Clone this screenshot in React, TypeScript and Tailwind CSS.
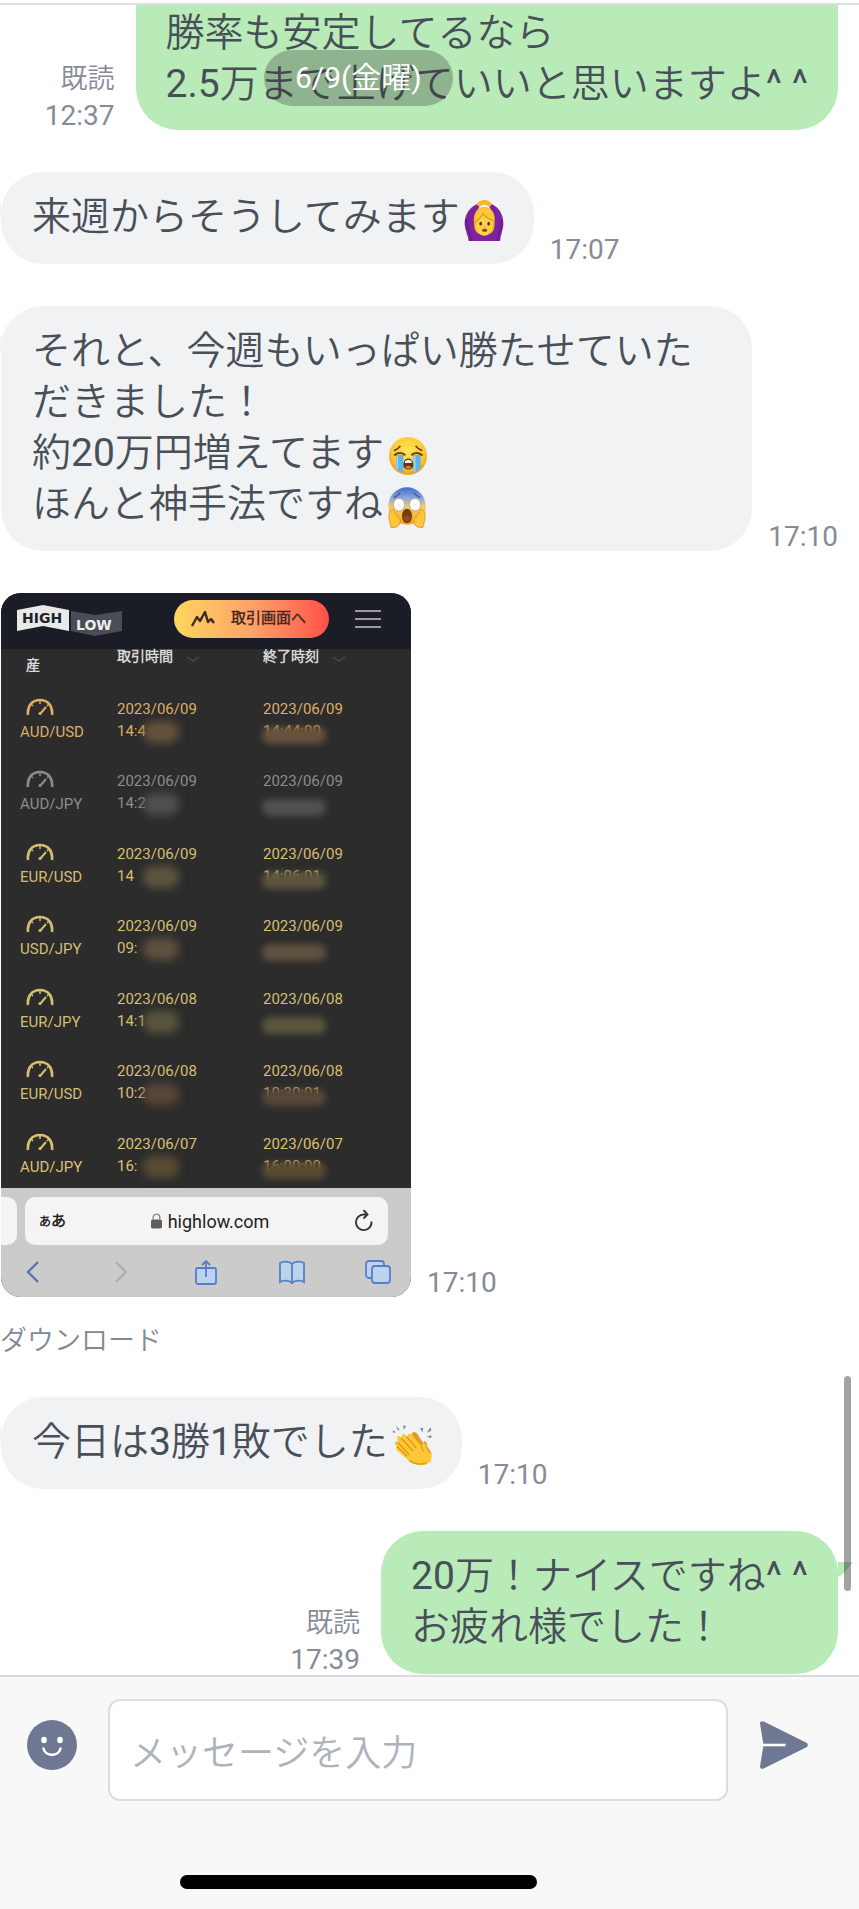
import { ReactNode } from 'react'

type Trade = {
  pair: string
  start: string
  startTime: string
  end: string
  endTime: string
  tone: string
  smudge: string
}

const TRADES: Trade[] = [
  { pair: 'AUD/USD', start: '2023/06/09', startTime: '14:4', end: '2023/06/09', endTime: '14:44:00', tone: 'text-[#dcae66]', smudge: 'bg-[#66523a]' },
  { pair: 'AUD/JPY', start: '2023/06/09', startTime: '14:2', end: '2023/06/09', endTime: '', tone: 'text-[#8c8c8c]', smudge: 'bg-[#505050]' },
  { pair: 'EUR/USD', start: '2023/06/09', startTime: '14', end: '2023/06/09', endTime: '14:06:01', tone: 'text-[#d6bd72]', smudge: 'bg-[#5c553e]' },
  { pair: 'USD/JPY', start: '2023/06/09', startTime: '09:', end: '2023/06/09', endTime: '', tone: 'text-[#d3bf72]', smudge: 'bg-[#5f503f]' },
  { pair: 'EUR/JPY', start: '2023/06/08', startTime: '14:1', end: '2023/06/08', endTime: '', tone: 'text-[#d3bf72]', smudge: 'bg-[#5a553d]' },
  { pair: 'EUR/USD', start: '2023/06/08', startTime: '10:2', end: '2023/06/08', endTime: '10:30:01', tone: 'text-[#d6bd72]', smudge: 'bg-[#584639]' },
  { pair: 'AUD/JPY', start: '2023/06/07', startTime: '16:', end: '2023/06/07', endTime: '16:00:00', tone: 'text-[#dcc070]', smudge: 'bg-[#5a4c34]' },
]

export default function App() {
  return (
    <div className="min-h-screen flex flex-col bg-white font-['Roboto','Noto_Sans_CJK_JP_DemiLight','Noto_Sans_CJK_JP',sans-serif] font-normal text-[#484f58]">
      <main className="relative flex-1 overflow-hidden pt-[3px]">
        <div className="border-t-2 border-[#dedfe6]">
          <div className="flex flex-col gap-[42px]">
            <Sent time="12:37" cut>
              勝率も安定してるなら<br />
              2.5万まで上げていいと思いますよ^ ^
            </Sent>

            <Received time="17:07">来週からそうしてみます<ArmsUp /></Received>

            <Received time="17:10" wide>
              それと、今週もいっぱい勝たせていた<br />
              だきました！<br />
              約20万円増えてます<Crying /><br />
              ほんと神手法ですね<Scream />
            </Received>

            <div className="-mb-[6px]">
              <div className="flex items-end gap-4 pl-px">
                <Attachment />
                <Time>17:10</Time>
              </div>
              <a href="#download" className="mt-6 block w-fit text-[27px] leading-[40px] text-[#7f8998]">ダウンロード</a>
            </div>

            <Received time="17:10">今日は3勝1敗でした<Clap /></Received>

            <Sent time="17:39">
              20万！ナイスですね^ ^<br />
              お疲れ様でした！
            </Sent>
          </div>
        </div>

        {/* floating date + scroll thumb */}
        <div className="absolute left-[264px] top-[50px] rounded-full bg-[#323232]/30 px-[31px] py-2 text-[30px] leading-[40px] text-white">6/9(金曜)</div>
        <div className="absolute right-2 bottom-[84px] h-[215px] w-[7px] rounded-full bg-black/36" />
      </main>

      <footer className="border-t-2 border-[#d9dbe4] bg-[#f8f8f9] pt-[22px] pb-5">
        <form className="flex items-start pl-[27px] pr-[50px]" onSubmit={e => e.preventDefault()}>
          <button type="button" aria-label="絵文字" className="mt-[21px] shrink-0">
            <svg viewBox="0 0 50 50" className="size-[50px]">
              <circle cx="25" cy="25" r="25" fill="#6f7893" />
              <ellipse cx="17" cy="20" rx="2.8" ry="3.2" fill="#fff" />
              <ellipse cx="33" cy="20" rx="2.8" ry="3.2" fill="#fff" />
              <path d="M16.500 28.500C18.500 37 31.500 37 33.500 28.500" fill="none" stroke="#fff" strokeWidth="2.600" strokeLinecap="round" />
            </svg>
          </button>
          <input
            type="text"
            aria-label="メッセージを入力"
            placeholder="メッセージを入力"
            className="mx-[31px] h-[102px] min-w-0 flex-1 rounded-xl border-2 border-[#dcdddf] bg-white px-5 pt-2 text-[36px] outline-none placeholder:text-[#adb2bd]"
          />
          <button type="submit" aria-label="送信" className="mt-[21px] shrink-0">
            <svg viewBox="0 0 50 50" className="size-[50px]">
              <path d="M1 3.500C1 1.500 3 .6 4.700 1.500L47.500 22.800C49.300 23.800 49.300 26.200 47.500 27.200L4.700 48.500C3 49.400 1 48.500 1 46.500L4.500 25Z" fill="#6f7893" />
              <path d="M4 25H26.500" stroke="#fff" strokeWidth="2.600" />
            </svg>
          </button>
        </form>
        <div className="mt-[74px] ml-[21%] h-[14px] w-[357px] rounded-full bg-black" />
      </footer>
    </div>
  )
}

function Time({ children }: { children: ReactNode }) {
  return <div className="flex shrink-0 flex-col gap-[9px] text-right text-[28px] leading-[28px] text-[#868b98]">{children}</div>
}

function Received({ time, wide, children }: { time: string; wide?: boolean; children: ReactNode }) {
  return (
    <div className="flex items-end gap-4 pl-px pr-[21px]">
      <div className={`relative rounded-[42px] bg-[#f1f2f4] pt-5 pb-[21px] pl-[31px] text-[39px] leading-[51px] ${wide ? 'flex-1' : 'pr-[30px]'}`}>
        <svg viewBox="0 0 15 16" className="absolute right-full top-[30px] h-4 w-[15px] -scale-x-100">
          <path d="M0 0H15C12 4 6 12 0 15Z" fill="#f1f2f4" />
        </svg>
        {children}
      </div>
      <Time>{time}</Time>
    </div>
  )
}

function Sent({ time, cut, children }: { time: string; cut?: boolean; children: ReactNode }) {
  return (
    <div className="flex items-end justify-end gap-[21px] pr-[21px]">
      <Time>
        <span className="text-[27px]">既読</span>
        <span>{time}</span>
      </Time>
      <div className={`relative bg-[#b8ebb8] px-[30px] text-[39px] leading-[51px] ${cut ? 'rounded-b-[42px] pt-[3px] pb-5' : 'rounded-[42px] pt-5 pb-[21px]'}`}>
        {!cut && (
          <svg viewBox="0 0 15 16" className="absolute left-full top-[31px] h-4 w-[15px]">
            <path d="M0 0H15C12 4 6 12 0 15Z" fill="#b8ebb8" />
          </svg>
        )}
        {children}
      </div>
    </div>
  )
}

function Attachment() {
  return (
    <div className="w-[410px] overflow-hidden rounded-[20px] bg-[#2c2c2c]">
      <div className="flex h-14 items-center bg-[#1a1c26] pl-4 pr-[30px]">
        <Logo />
        <button type="button" className="ml-[51px] -mt-[5px] flex h-[38px] w-[155px] items-center rounded-full bg-linear-to-r from-[#ffd65c] via-[#ffa267] to-[#ff4d4a] pl-4 text-[15px] font-bold text-[#4a2c26]">
          <svg viewBox="0 0 26 20" className="mr-[15px] w-[26px]" fill="none" stroke="#3b2b20" strokeWidth="2.400" strokeLinejoin="round">
            <path d="M2 17L7 8L10 12L15 3L18 13L21 10L24 14" />
          </svg>
          取引画面へ
        </button>
        <button type="button" aria-label="メニュー" className="ml-auto -mt-1 flex w-[26px] flex-col gap-[6px]">
          <span className="h-[2px] bg-[#9a9ba2]" />
          <span className="h-[2px] bg-[#9a9ba2]" />
          <span className="h-[2px] bg-[#9a9ba2]" />
        </button>
      </div>

      <table className="h-[539px] w-full table-fixed border-collapse text-left">
        <colgroup>
          <col className="w-[116px]" />
          <col className="w-[146px]" />
          <col />
        </colgroup>
        <thead>
          <tr className="h-8 align-top text-[14px] leading-[14px] text-[#d8d8d8]">
            <th className="p-0 pl-[25px] font-bold"><span className="block pt-[9px]">産</span></th>
            <th className="p-0 font-bold"><ColumnTitle label="取引時間" /></th>
            <th className="p-0 font-bold"><ColumnTitle label="終了時刻" /></th>
          </tr>
        </thead>
        <tbody>
          {TRADES.map((t, i) => (
            <tr key={i} className={`align-top text-[15px] leading-[22px] ${t.tone}`}>
              <td className="p-0 pt-[17px] pl-[19px]">
                <Gauge />
                <span className="block pt-[5px]">{t.pair}</span>
              </td>
              <td className="p-0 pt-[17px]">
                {t.start}
                <div className="relative h-[22px]">
                  {t.startTime}
                  <span className={`absolute left-[26px] top-px h-[22px] w-9 rounded-full blur-[4px] ${t.smudge}`} />
                </div>
              </td>
              <td className="p-0 pt-[17px]">
                {t.end}
                <div className="relative h-[22px]">
                  {t.endTime}
                  <span className={`absolute -left-px top-[7px] h-[17px] w-16 rounded-lg blur-[3px] ${t.smudge}`} />
                </div>
              </td>
            </tr>
          ))}
        </tbody>
      </table>

      <SafariBar />
    </div>
  )
}

function ColumnTitle({ label }: { label: string }) {
  return (
    <span className="flex h-[14px] items-end">
      {label}
      <svg viewBox="0 0 16 6" className="ml-3 mb-px w-4" fill="none" stroke="#484848" strokeWidth="1.500">
        <path d="M2 1L8 5L14 1" />
      </svg>
    </span>
  )
}

function Logo() {
  return (
    <svg viewBox="0 0 106 32" className="w-[106px] font-['DejaVu_Sans',sans-serif] font-bold" role="img" aria-label="HIGH LOW">
      <path d="M0 5L26 0L52 5V26L26 21L0 26Z" fill="#e9e9ea" />
      <path d="M54 6L78 10L105 6V26L78 31L54 26Z" fill="#4b4d54" />
      <text x="5" y="18" fontSize="14" fill="#20222a">HIGH</text>
      <text x="59" y="25" fontSize="14" fill="#ededee">LOW</text>
    </svg>
  )
}

function Gauge() {
  return (
    <svg viewBox="0 0 28 18" className="ml-[6px] block h-[18px] w-7" fill="none" stroke="currentColor">
      <path d="M2 17C1 8 6 2 14 2S27 8 26 17" strokeWidth="2.600" />
      <path d="M14 2V6M5 6L7 8M23 6L21 8" strokeWidth="1.500" />
      <path d="M14 16L20 9" strokeWidth="2" />
      <circle cx="14" cy="15.500" r="1.500" fill="currentColor" stroke="none" />
    </svg>
  )
}

function SafariBar() {
  return (
    <div className="h-[109px] bg-[#cbcbcc] pt-[9px] text-[#222]">
      <div className="flex h-12 gap-2">
        <div className="w-4 rounded-r-[10px] bg-[#f4f4f4]" />
        <div className="mr-[23px] flex flex-1 items-center rounded-[10px] bg-[#f4f4f4] px-[14px]">
          <span className="text-[15px] font-bold"><small className="text-[12px]">あ</small>あ</span>
          <div className="flex flex-1 items-center justify-center gap-[6px] text-[18px]">
            <svg viewBox="0 0 10 15" className="w-[11px]">
              <rect y="6" width="10" height="8" rx="1.500" fill="#5e5e5e" />
              <path d="M2 6V4C2 0 8 0 8 4V6" fill="none" stroke="#8a8a8a" strokeWidth="1.300" />
            </svg>
            highlow.com
          </div>
          <svg viewBox="0 0 20 22" className="h-[22px] w-5" fill="none" stroke="#333" strokeWidth="1.900">
            <path d="M17.500 11.500A7.800 7.800 0 1 1 9.700 4.500H13" />
            <path d="M9.500 0L13.500 4.500L9.500 8.500" />
          </svg>
        </div>
      </div>
      <div className="mt-[14px] flex justify-between px-5 [&>svg]:size-[26px]">
        <svg viewBox="0 0 26 26" fill="none" stroke="#5672b4" strokeWidth="2.200"><path d="M17 3L7 13L17 23" /></svg>
        <svg viewBox="0 0 26 26" fill="none" stroke="#adadb2" strokeWidth="2.200"><path d="M9 3L19 13L9 23" /></svg>
        <svg viewBox="0 0 26 26" fill="#bdd2ec" stroke="#557fca" strokeWidth="1.800">
          <rect x="3" y="9" width="20" height="16" rx="2" />
          <path d="M13 18V2M9 6L13 2L17 6" fill="none" />
        </svg>
        <svg viewBox="0 0 26 26" fill="#bdd2ec" stroke="#557fca" strokeWidth="1.800">
          <path d="M13 5C10 2 4 2 1 4V23C4 21 10 21 13 24C16 21 22 21 25 23V4C22 2 16 2 13 5ZM13 5V24" />
        </svg>
        <svg viewBox="0 0 26 26" fill="#bdd2ec" stroke="#557fca" strokeWidth="1.800">
          <rect x="1" y="2" width="18" height="17" rx="3" />
          <rect x="7" y="7" width="18" height="17" rx="3" />
        </svg>
      </div>
    </div>
  )
}

function Emoji({ label, children }: { label: string; children: ReactNode }) {
  return (
    <svg viewBox="0 0 120 126" role="img" aria-label={label} className="ml-1 inline-block h-[42px] w-10 align-middle">
      {children}
    </svg>
  )
}

function ArmsUp() {
  return (
    <Emoji label="🙆">
      <path d="M38 18C44 -2 78 -2 84 18L78 28C72 14 50 14 44 28Z" fill="#f7b928" />
      <path d="M38 16L46 24C36 38 34 50 36 70L44 98H78L86 70C88 50 86 38 76 24L84 16C106 26 120 50 118 78C116 96 110 108 108 126H14C12 108 4 96 2 78C0 50 16 26 38 16Z" fill="#7d23a0" />
      <path d="M8 60C6 84 20 100 22 126M112 60C114 84 102 100 100 126" stroke="#5d1580" strokeWidth="3" fill="none" />
      <path d="M30 72C26 40 42 24 61 24S96 40 92 72C92 98 84 106 61 108C38 106 30 98 30 72Z" fill="#f0ae25" />
      <path d="M35 74C35 54 48 44 61 44S89 54 87 74C86 98 74 110 61 110S36 98 35 74Z" fill="#fdd047" />
      <path d="M32 72C30 40 46 25 62 25C82 25 92 42 90 68C78 64 64 56 56 44C52 58 42 62 32 72Z" fill="#fbc638" />
      <path d="M32 72C42 62 52 58 56 44C68 59 79 61 89 66" stroke="#d99622" strokeWidth="3.500" fill="none" />
      <ellipse cx="50" cy="74" rx="4" ry="5.500" fill="#513018" />
      <ellipse cx="74" cy="74" rx="4" ry="5.500" fill="#513018" />
      <ellipse cx="62" cy="94" rx="8" ry="4.500" fill="#8a3a1c" />
      <path d="M59 84Q62 87 65 84" stroke="#c98518" strokeWidth="2" fill="none" />
    </Emoji>
  )
}

function Crying() {
  return (
    <Emoji label="😭">
      <defs>
        <radialGradient id="cry" cx=".5" cy=".4" r=".6">
          <stop offset="0" stopColor="#ffe65a" />
          <stop offset=".7" stopColor="#fdc934" />
          <stop offset="1" stopColor="#e89a1c" />
        </radialGradient>
      </defs>
      <circle cx="60" cy="63" r="57" fill="url(#cry)" />
      <path d="M24 60H46V114Q34 110 24 100ZM76 60H98V98Q88 110 76 114Z" fill="#5eb4ed" />
      <path d="M28 62V102M80 62V110" stroke="#96d5fa" strokeWidth="5" />
      <path d="M20 60Q34 49 50 59M72 59Q86 49 102 60" stroke="#70420f" strokeWidth="6" fill="none" strokeLinecap="round" />
      <path d="M20 46Q30 43 36 34M84 34Q91 43 101 46" stroke="#70420f" strokeWidth="5" fill="none" strokeLinecap="round" />
      <path d="M46 90C46 64 76 64 76 90C76 108 46 108 46 90Z" fill="#6b3410" />
      <path d="M51 79Q61 69 71 79V84H51Z" fill="#fff" />
      <path d="M51 97Q61 87 71 97Q62 105 51 97Z" fill="#e47b46" />
    </Emoji>
  )
}

function Scream() {
  return (
    <Emoji label="😱">
      <defs>
        <linearGradient id="fear" x1="0" y1="0" x2="0" y2="1">
          <stop offset="0" stopColor="#3e70c9" />
          <stop offset=".3" stopColor="#8faade" />
          <stop offset=".52" stopColor="#f3cd68" />
          <stop offset="1" stopColor="#f5a322" />
        </linearGradient>
      </defs>
      <circle cx="60" cy="60" r="56" fill="url(#fear)" />
      <ellipse cx="36" cy="56" rx="17" ry="19" fill="#fff" stroke="#ad8b62" strokeWidth="2" />
      <ellipse cx="84" cy="56" rx="17" ry="19" fill="#fff" stroke="#ad8b62" strokeWidth="2" />
      <circle cx="37" cy="57" r="4" fill="#eee" />
      <circle cx="83" cy="57" r="4" fill="#eee" />
      <path d="M22 34Q32 30 38 22M82 22Q88 30 98 34" stroke="#496193" strokeWidth="5" fill="none" strokeLinecap="round" />
      <ellipse cx="60" cy="90" rx="15" ry="22" fill="#763a10" />
      <path d="M49 95Q60 82 71 95Q67 108 60 108T49 95Z" fill="#974918" />
      <path d="M8 78C12 66 22 70 24 82L40 102Q40 120 24 124H12C10 110 2 98 8 78ZM112 78C108 66 98 70 96 82L80 102Q80 120 96 124H108C110 110 118 98 112 78Z" fill="#fdc63d" stroke="#dc8e1b" strokeWidth="2.500" />
    </Emoji>
  )
}

function Clap() {
  return (
    <Emoji label="👏">
      <path d="M2 19L12 24L4 27ZM12 4L23 19L17 19ZM33 5L42 5L36 17ZM84 12L94 13L91 25ZM104 26L116 10L118 20ZM104 38L118 34L118 42Z" fill="#85858a" />
      <path d="M60 28C68 18 76 27 82 40L94 58C98 46 105 54 105 66L118 86L115 114L86 122L68 118Z" fill="#e39a1c" />
      <path d="M10 62C4 52 14 48 20 56L16 46C12 36 22 32 29 42C27 29 36 26 43 36L48 40C44 27 56 25 61 34L89 68C90 51 103 57 103 72L119 94C120 110 106 125 88 124C68 122 54 116 44 104L16 80C8 72 12 66 18 68Z" fill="#fdc735" />
      <path d="M18 56L51 91M28 43L62 80M43 38L72 70M16 68L44 96M89 68Q88 76 94 80" stroke="#d68e19" strokeWidth="3.500" fill="none" strokeLinecap="round" />
      <path d="M52 110Q76 126 104 117" stroke="#e09c20" strokeWidth="4" fill="none" />
    </Emoji>
  )
}
